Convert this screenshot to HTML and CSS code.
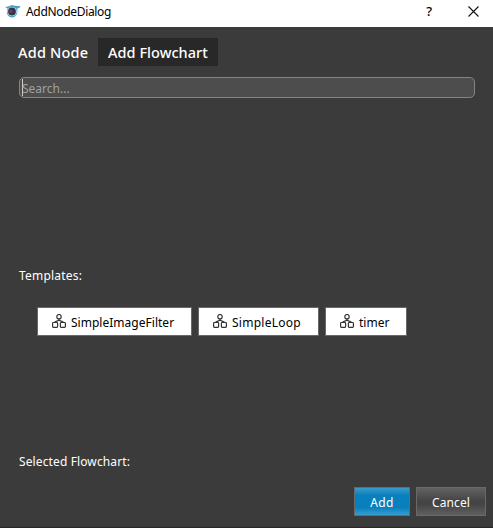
FILE: index.html
```html
<!DOCTYPE html>
<html lang="en">
<head>
<meta charset="utf-8">
<title>AddNodeDialog</title>
<link rel="stylesheet" href="styles.css">
</head>
<body>
<svg class="defs" width="0" height="0" aria-hidden="true">
  <symbol id="flow" viewBox="0 0 14 14">
    <g fill="none" stroke="#333" stroke-width="1.2">
      <circle cx="7" cy="2.7" r="2.2"/>
      <path d="M7 4.9V6.2M3 8.6V8L7 6.2L11 8V8.6"/>
      <rect x=".6" y="8.5" width="5" height="4.9" rx=".8"/>
      <rect x="8.4" y="8.5" width="5" height="4.9" rx=".8"/>
    </g>
  </symbol>
</svg>
<div class="dialog">
  <header class="titlebar">
    <svg class="logo" width="16" height="15" viewBox="0 0 16 15">
      <path d="M.3 2.6C2 3.3 3.4 2.4 5 1.7C8 .5 10.5 2.7 15.5 2C14.7 4 13.5 4.4 12.2 4.5C13.2 9.4 11 13.6 6.8 13.4C3.8 13.2 2 11 1.8 8.5C2 6.8 2.3 5.8 2.8 4.7C1.5 4.4.6 3.7.3 2.6Z" fill="#459cc4"/>
      <circle cx="7.1" cy="7.6" r="4.7" fill="#d5e5ed"/>
      <circle cx="7" cy="7.5" r="3.9" fill="#32364c"/>
      <circle cx="5.9" cy="7.2" r="1.5" fill="#704651"/>
    </svg>
    <span class="title">AddNodeDialog</span>
    <span class="help">?</span>
    <svg class="close" width="11" height="11" viewBox="0 0 11 11"><path d="M.5.5l10 10M10.5.5l-10 10" stroke="#111" stroke-width="1.1"/></svg>
  </header>
  <main class="content">
    <nav class="tabs">
      <span class="tab tab-node">Add Node</span>
      <span class="tab tab-flow active">Add Flowchart</span>
    </nav>
    <div class="search"><span class="caret"></span><span class="placeholder">Search...</span></div>
    <div class="label templates-label">Templates:</div>
    <div class="templates">
      <div class="template filter"><svg width="14" height="14"><use href="#flow"/></svg><span>SimpleImageFilter</span></div>
      <div class="template loop"><svg width="14" height="14"><use href="#flow"/></svg><span>SimpleLoop</span></div>
      <div class="template timer"><svg width="14" height="14"><use href="#flow"/></svg><span>timer</span></div>
    </div>
    <div class="label selected-label">Selected Flowchart:</div>
    <footer class="actions">
      <div class="button primary">Add</div>
      <div class="button secondary">Cancel</div>
    </footer>
  </main>
</div>
</body>
</html>
```

FILE: styles.css
```css
* { box-sizing: border-box; }
body { margin: 0; font: 12px/16px "Noto Sans", "Open Sans", sans-serif; color: #fff; white-space: nowrap; overflow: hidden; }
.defs { display: block; }
.dialog { width: 493px; height: 528px; display: flex; flex-direction: column; background: #3b3b3b; border-bottom: 1px solid #2a2526; }
.titlebar { height: 27px; flex: none; display: flex; align-items: center; padding: 0 14px 4px 5px; background: #fff; color: #000; }
.logo { margin-right: 5px; }
.title { flex: 1; letter-spacing: -.32px; padding-top: 1px; }
.help { font-size: 13px; font-weight: 500; margin-right: 36px; padding-bottom: 2px; }
.close { display: block; }
.content { flex: 1; display: flex; flex-direction: column; padding: 11px 7px 11px 19px; }
.tabs { display: flex; height: 28px; flex: none; }
.tab { display: flex; align-items: center; font-size: 14.5px; font-weight: 500; letter-spacing: .04px; }
.tab-node { width: 79px; margin-left: -1px; letter-spacing: .2px; }
.tab-flow { width: 120px; margin-left: 1px; padding-left: 10px; }
.active { background: #282828; }
.search { width: 456px; height: 21px; flex: none; margin-top: 11px; border: 1px solid #858585; border-radius: 5px; background: #4d4d4d; display: flex; align-items: center; padding-left: 2px; color: #a0a0a0; }
.caret { width: 1px; height: 17px; margin-right: -1px; background: #d0d0d0; }
.placeholder { padding-top: 2px; }
.label { letter-spacing: .12px; }
.templates-label { margin-top: 170px; letter-spacing: .2px; }
.templates { display: flex; gap: 6px; margin: 23px 0 0 18px; }
.template { height: 29px; border: 1px solid #686868; background: #fff; color: #000; display: flex; align-items: center; gap: 5px; padding-left: 14px; }
.template svg { margin-bottom: 1px; }
.template span { padding-top: 2px; }
.filter { width: 155px; letter-spacing: .02px; }
.loop { width: 121px; letter-spacing: .26px; }
.timer { width: 82px; }
.selected-label { margin-top: 118px; }
.actions { margin-top: auto; display: flex; justify-content: flex-end; gap: 6px; }
.button { height: 29px; border: 1px solid #696969; display: flex; align-items: center; justify-content: center; padding-top: 2px; }
.primary { width: 56px; letter-spacing: .4px; background: linear-gradient(#3a9bcb 0%, #0780bd 28%, #0780bd 72%, #3a9bcb 100%); }
.secondary { width: 70px; letter-spacing: .1px; background: linear-gradient(#626262 0%, #444 48%, #444 60%, #606060 100%); }
```
